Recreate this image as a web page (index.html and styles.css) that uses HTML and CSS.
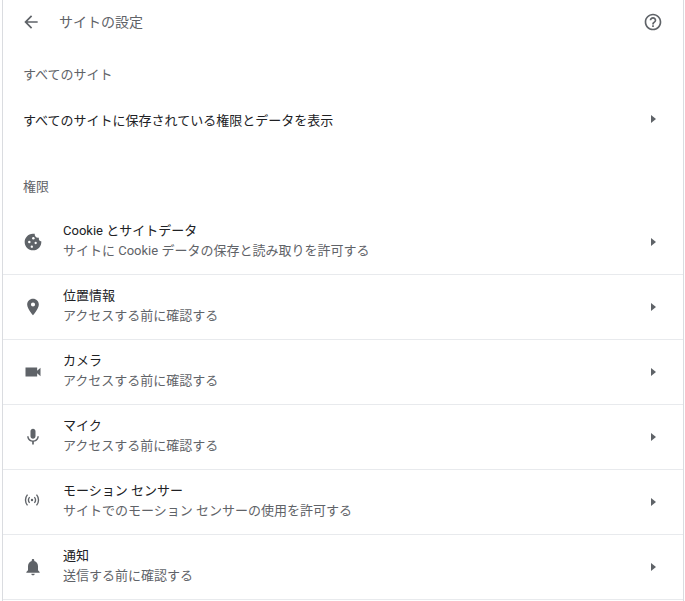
FILE: index.html
```html
<!DOCTYPE html>
<html lang="ja">
<head>
    <meta charset="UTF-8">
    <title>サイトの設定</title>
    <link rel="stylesheet" href="styles.css">
</head>
<body>
    <div class="card">
        <div class="header">
            <svg class="back" viewBox="0 0 24 24"><path d="M20 11H7.83l5.59-5.59L12 4l-8 8 8 8 1.41-1.41L7.83 13H20v-2z"/></svg>
            <span class="page-title">サイトの設定</span>
            <svg class="help" viewBox="0 0 24 24"><path d="M11 18h2v-2h-2v2zm1-16C6.48 2 2 6.48 2 12s4.48 10 10 10 10-4.48 10-10S17.52 2 12 2zm0 18c-4.41 0-8-3.59-8-8s3.59-8 8-8 8 3.59 8 8-3.59 8-8 8zm0-14c-2.21 0-4 1.79-4 4h2c0-1.1.9-2 2-2s2 .9 2 2c0 2-3 1.75-3 5h2c0-2.25 3-2.5 3-5 0-2.21-1.79-4-4-4z"/></svg>
        </div>

        <div class="section-label first">すべてのサイト</div>
        <div class="all-sites">
            <span>すべてのサイトに保存されている権限とデータを表示</span>
            <span class="arrow"></span>
        </div>

        <div class="section-label second">権限</div>

        <div class="row">
            <svg class="icon" viewBox="0 0 24 24"><path fill-rule="evenodd" d="M21.95 10.99c-1.79-.03-3.7-1.95-2.68-4.22-2.98 1-5.77-1.59-5.19-4.56C6.95.71 2 6.58 2 12c0 5.52 4.48 10 10 10 5.89 0 10.54-5.08 9.95-11.01z"/><circle class="hole" cx="12.4" cy="7.4" r="1.5"/><circle class="hole" cx="7.6" cy="12" r="1.5"/><circle class="hole" cx="15.2" cy="13.2" r="1.4"/><circle class="hole" cx="10.6" cy="17.6" r="1.4"/></svg>
            <div class="text">
                <div class="title">Cookie とサイトデータ</div>
                <div class="sub">サイトに Cookie データの保存と読み取りを許可する</div>
            </div>
            <span class="arrow"></span>
        </div>
        <div class="row">
            <svg class="icon" viewBox="0 0 24 24"><path d="M12 2C8.13 2 5 5.13 5 9c0 5.25 7 13 7 13s7-7.75 7-13c0-3.87-3.13-7-7-7zm0 9.5a2.5 2.5 0 0 1 0-5 2.5 2.5 0 0 1 0 5z"/></svg>
            <div class="text">
                <div class="title">位置情報</div>
                <div class="sub">アクセスする前に確認する</div>
            </div>
            <span class="arrow"></span>
        </div>
        <div class="row">
            <svg class="icon" viewBox="0 0 24 24"><path d="M17 10.5V6.5H3v11h14v-4l4 3.5V7l-4 3.5z"/></svg>
            <div class="text">
                <div class="title">カメラ</div>
                <div class="sub">アクセスする前に確認する</div>
            </div>
            <span class="arrow"></span>
        </div>
        <div class="row">
            <svg class="icon" viewBox="0 0 24 24"><path d="M12 14c1.66 0 3-1.34 3-3V5c0-1.66-1.34-3-3-3S9 3.34 9 5v6c0 1.66 1.34 3 3 3zm5.3-3c0 3-2.54 5.1-5.3 5.1S6.7 14 6.7 11H5c0 3.41 2.72 6.23 6 6.72V21h2v-3.28c3.28-.48 6-3.3 6-6.72h-1.7z"/></svg>
            <div class="text">
                <div class="title">マイク</div>
                <div class="sub">アクセスする前に確認する</div>
            </div>
            <span class="arrow"></span>
        </div>
        <div class="row">
            <svg class="icon motion" viewBox="0 0 24 24"><circle cx="12" cy="12" r="1.6"/><path class="wave" d="M8.8 8.2a6 6 0 0 0 0 7.6M15.2 8.2a6 6 0 0 1 0 7.6M6 4.8a11 11 0 0 0 0 14.4M18 4.8a11 11 0 0 1 0 14.4"/></svg>
            <div class="text">
                <div class="title">モーション センサー</div>
                <div class="sub">サイトでのモーション センサーの使用を許可する</div>
            </div>
            <span class="arrow"></span>
        </div>
        <div class="row">
            <svg class="icon" viewBox="0 0 24 24"><path d="M12 22c1.1 0 2-.9 2-2h-4c0 1.1.9 2 2 2zm6-6v-5c0-3.07-1.63-5.64-4.5-6.32V4c0-.83-.67-1.5-1.5-1.5s-1.5.67-1.5 1.5v.68C7.64 5.36 6 7.92 6 11v5l-2 2v1h16v-1l-2-2z"/></svg>
            <div class="text">
                <div class="title">通知</div>
                <div class="sub">送信する前に確認する</div>
            </div>
            <span class="arrow"></span>
        </div>
    </div>
</body>
</html>
```

FILE: styles.css
```css
html, body {
    margin: 0;
    padding: 0;
    background-color: #fff;
    overflow: hidden;
}

body {
    font-family: Roboto, "Noto Sans CJK JP", sans-serif;
    font-size: 13px;
    color: #202124;
}

.card {
    margin: 0 1px 0 2px;
    border-left: 1px solid #dadce0;
    border-right: 1px solid #dadce0;
    height: 601px;
    box-sizing: border-box;
}

.header {
    display: flex;
    align-items: center;
    height: 43px;
    padding: 0 20px 0 18px;
}

.back {
    width: 20px;
    height: 20px;
    fill: #5f6368;
}

.page-title {
    margin-left: 18px;
    margin-bottom: 2px;
    font-size: 14px;
    color: #5f6368;
    flex: 1;
}

.help {
    width: 20px;
    height: 20px;
    fill: #5f6368;
}

.section-label {
    padding-left: 20px;
    line-height: 20px;
    color: #5f6368;
}

.section-label.first {
    margin-top: 22px;
}

.section-label.second {
    margin-top: 38px;
}

.all-sites {
    display: flex;
    align-items: center;
    justify-content: space-between;
    height: 40px;
    margin-top: 14px;
    padding: 0 27px 0 20px;
}

.row {
    display: flex;
    align-items: center;
    height: 65px;
    box-sizing: border-box;
    padding: 0 27px 0 20px;
    border-bottom: 1px solid #e8eaed;
}

.second + .row {
    margin-top: 13px;
}

.icon {
    width: 20px;
    height: 20px;
    fill: #5f6368;
    flex-shrink: 0;
}

.hole {
    fill: #fff;
}

.motion {
    width: 18px;
    height: 18px;
    margin: 0 2px 4px 0;
}

.wave {
    fill: none;
    stroke: #5f6368;
    stroke-width: 1.8;
}

.text {
    flex: 1;
    margin-left: 20px;
    margin-bottom: 2px;
}

.title {
    line-height: 20px;
}

.sub {
    line-height: 20px;
    color: #5f6368;
}

.arrow {
    width: 0;
    height: 0;
    border-top: 4.5px solid transparent;
    border-bottom: 4.5px solid transparent;
    border-left: 5px solid #5f6368;
}
```
